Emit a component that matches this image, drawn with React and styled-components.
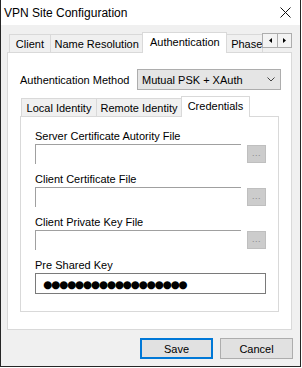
import React from 'react';
import styled, { createGlobalStyle } from 'styled-components';

const Global = createGlobalStyle`
  html, body { margin: 0; padding: 0; background: #ffffff; }
  body { font-family: "Liberation Sans", Arial, sans-serif; font-size: 11px; color: #000; }
  * { box-sizing: border-box; }
`;

const Window = styled.div`
  width: 301px;
  height: 367px;
  border: 1px solid #262626;
  border-top: none;
  background: #f0f0f0;
  display: flex;
  flex-direction: column;
`;

const TitleBar = styled.div`
  height: 25px;
  background: #ffffff;
  display: flex;
  align-items: center;
  justify-content: space-between;
  padding: 0 9px 0 3px;
  font-size: 12px;
`;

const Body = styled.div`
  flex: 1;
  display: flex;
  flex-direction: column;
  padding: 7px 7px 7px 6px;
`;

const TabControl = styled.div`
  display: flex;
  flex-direction: column;
  width: ${p => p.$w}px;
`;

const TabStrip = styled.div`
  display: flex;
  align-items: flex-end;
  height: 20px;
  padding-left: ${p => p.$pad}px;
`;

const Tab = styled.div`
  position: relative;
  width: ${p => p.$w}px;
  height: ${p => (p.$active ? 21 : 18)}px;
  margin-bottom: ${p => (p.$active ? -1 : 0)}px;
  margin-left: ${p => (p.$first ? 0 : -1)}px;
  z-index: ${p => (p.$active ? 2 : 1)};
  background: ${p => (p.$active ? '#ffffff' : '#f0f0f0')};
  border: 1px solid #d9d9d9;
  border-bottom: none;
  display: flex;
  align-items: center;
  justify-content: ${p => (p.$clip ? 'flex-start' : 'center')};
  padding: ${p => (p.$clip ? '0 0 0 4px' : '0')};
  padding-bottom: ${p => (p.$active ? 2 : 0)}px;
  white-space: nowrap;
  overflow: hidden;
`;

const Scroller = styled.div`
  align-self: flex-start;
  margin-top: 1px;
  margin-left: -1px;
  position: relative;
  z-index: 3;
  display: flex;
  height: 15px;
  border: 1px solid #adadad;
  background: #f3f3f3;
`;

const ScrollBtn = styled.div`
  width: 14px;
  height: 13px;
  display: flex;
  align-items: center;
  justify-content: center;
  border-left: ${p => (p.$second ? '1px solid #adadad' : 'none')};
`;

const Panel = styled.div`
  height: ${p => p.$h}px;
  background: #ffffff;
  border: 1px solid #d9d9d9;
  padding: ${p => p.$pad};
  display: flex;
  flex-direction: column;
`;

const MethodRow = styled.div`
  display: flex;
  align-items: center;
  height: 21px;
`;

const MethodLabel = styled.div`
  width: 117px;
`;

const Select = styled.div`
  width: 144px;
  height: 21px;
  border: 1px solid #adadad;
  background: #e5e5e5;
  display: flex;
  align-items: center;
  justify-content: space-between;
  padding: 0 5px 0 4px;
`;

const InnerTabs = styled.div`
  margin-top: 6px;
`;

const Fields = styled.div`
  display: flex;
  flex-direction: column;
  gap: 8px;
`;

const Group = styled.div`
  display: flex;
  flex-direction: column;
`;

const Label = styled.div`
  height: 14px;
  line-height: 14px;
  margin-bottom: 1px;
`;

const Row = styled.div`
  display: flex;
  align-items: center;
  height: 20px;
  gap: 6px;
`;

const FileInput = styled.div`
  width: 206px;
  height: 20px;
  background: #ffffff;
  border-top: 1px solid #a0a0a0;
  border-left: 1px solid #a0a0a0;
`;

const Browse = styled.div`
  width: 19px;
  height: 18px;
  background: #cccccc;
  border: 1px solid #bfbfbf;
  color: #8a8a8a;
  font-size: 9px;
  line-height: 9px;
  display: flex;
  align-items: flex-end;
  justify-content: center;
  padding-bottom: 4px;
  letter-spacing: 0.5px;
`;

const Password = styled.div`
  width: 231px;
  height: 21px;
  border: 1px solid #7a7a7a;
  background: #ffffff;
  display: flex;
  align-items: center;
  padding-left: 7px;
  font-family: "DejaVu Sans", sans-serif;
  font-size: 10.5px;
  letter-spacing: -1.2px;
  color: #000;
`;

const Buttons = styled.div`
  display: flex;
  justify-content: flex-end;
  gap: 7px;
  margin-top: 8px;
`;

const Button = styled.div`
  width: 73px;
  height: 21px;
  background: #e1e1e1;
  border: ${p => (p.$primary ? '2px solid #0078d7' : '1px solid #adadad')};
  display: flex;
  align-items: center;
  justify-content: center;
`;

const FileField = ({ label }) => (
  <Group>
    <Label>{label}</Label>
    <Row>
      <FileInput />
      <Browse>...</Browse>
    </Row>
  </Group>
);

export default function App() {
  return (
    <>
      <Global />
      <Window>
        <TitleBar>
          <span>VPN Site Configuration</span>
          <svg width="11" height="11" viewBox="0 0 11 11">
            <path d="M0.5 0.5 L10.5 10.5 M10.5 0.5 L0.5 10.5" stroke="#111" strokeWidth="1" fill="none" />
          </svg>
        </TitleBar>
        <Body>
          <TabControl $w={285}>
            <TabStrip $pad={2}>
              <Tab $w={42} $first>Client</Tab>
              <Tab $w={94}>Name Resolution</Tab>
              <Tab $w={85} $active>Authentication</Tab>
              <Tab $w={37} $clip>Phase</Tab>
              <Scroller>
                <ScrollBtn>
                  <svg width="3" height="5" viewBox="0 0 3 5"><path d="M3 0 L0 2.5 L3 5 Z" fill="#000" /></svg>
                </ScrollBtn>
                <ScrollBtn $second>
                  <svg width="3" height="5" viewBox="0 0 3 5"><path d="M0 0 L3 2.5 L0 5 Z" fill="#000" /></svg>
                </ScrollBtn>
              </Scroller>
            </TabStrip>
            <Panel $h={278} $pad="16px 0 0 12px">
              <MethodRow>
                <MethodLabel>Authentication Method</MethodLabel>
                <Select>
                  <span>Mutual PSK + XAuth</span>
                  <svg width="8" height="5" viewBox="0 0 8 5">
                    <path d="M0.5 0.5 L4 4 L7.5 0.5" stroke="#444" strokeWidth="1" fill="none" />
                  </svg>
                </Select>
              </MethodRow>
              <InnerTabs>
                <TabControl $w={259}>
                  <TabStrip $pad={1}>
                    <Tab $w={76} $first>Local Identity</Tab>
                    <Tab $w={86}>Remote Identity</Tab>
                    <Tab $w={69} $active>Credentials</Tab>
                  </TabStrip>
                  <Panel $h={196} $pad="12px 0 0 14px">
                    <Fields>
                      <FileField label="Server Certificate Autority File" />
                      <FileField label="Client Certificate File" />
                      <FileField label="Client Private Key File" />
                      <Group>
                        <Label>Pre Shared Key</Label>
                        <Password>{'●'.repeat(18)}</Password>
                      </Group>
                    </Fields>
                  </Panel>
                </TabControl>
              </InnerTabs>
            </Panel>
          </TabControl>
          <Buttons>
            <Button $primary>Save</Button>
            <Button>Cancel</Button>
          </Buttons>
        </Body>
      </Window>
    </>
  );
}
